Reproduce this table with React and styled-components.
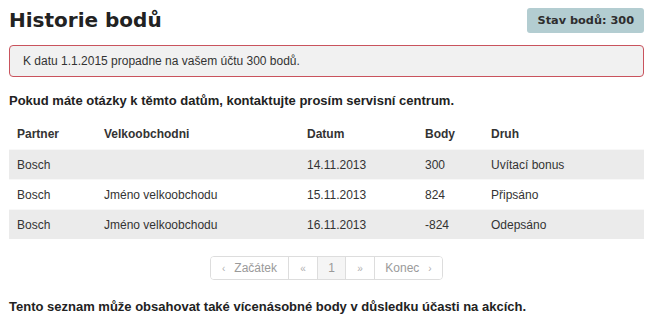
import styled, { createGlobalStyle } from 'styled-components';

const GlobalStyle = createGlobalStyle`
    body {
        margin: 0;
        background: #ffffff;
        font-family: "Liberation Sans", Arial, sans-serif;
        color: #333333;
    }
`;

const Page = styled.div`
    display: flex;
    flex-direction: column;
    padding: 8px 6px 0 9px;
    width: 635px;
`;

const Header = styled.div`
    display: flex;
    justify-content: space-between;
    align-items: flex-start;
`;

const Title = styled.h1`
    margin: 0;
    font-family: "DejaVu Sans", Verdana, sans-serif;
    font-size: 20px;
    line-height: 24px;
    font-weight: bold;
    color: #222222;
`;

const Badge = styled.div`
    display: flex;
    align-items: center;
    height: 25px;
    padding: 0 10px 0 11px;
    background-color: #b3cdd1;
    border-radius: 3px;
    font-family: "DejaVu Sans", Verdana, sans-serif;
    font-size: 11.3px;
    font-weight: bold;
    color: #2e2e2e;
`;

const Alert = styled.div`
    margin-top: 12px;
    height: 30px;
    display: flex;
    align-items: center;
    padding: 0 13px;
    background-color: #f1f1f1;
    border: 1px solid #c9535d;
    border-radius: 4px;
    font-size: 12px;
    color: #333333;
`;

const Notice = styled.p`
    margin: 16px 0 0;
    font-size: 13px;
    line-height: 16px;
    font-weight: bold;
    color: #222222;
`;

const Table = styled.table`
    margin-top: 10px;
    width: 100%;
    table-layout: fixed;
    border-collapse: collapse;
    font-size: 12px;
`;

const HeadCell = styled.th`
    height: 30px;
    padding: 0 0 0 8px;
    text-align: left;
    font-weight: bold;
    color: #333333;
    width: ${p => p.$w || 'auto'};
`;

const Row = styled.tr`
    background-color: ${p => (p.$odd ? '#ebebeb' : '#ffffff')};
    border-top: 1px solid #f8f8f8;
`;

const Cell = styled.td`
    height: 29px;
    padding: 0 0 0 8px;
    color: #333333;
`;

const Pager = styled.div`
    display: flex;
    justify-content: center;
    margin-top: 17px;
`;

const PagerList = styled.div`
    display: flex;
    border: 1px solid #dddddd;
    border-radius: 4px;
    overflow: hidden;
`;

const PagerItem = styled.span`
    display: flex;
    align-items: center;
    justify-content: center;
    gap: 9px;
    height: 22px;
    width: ${p => p.$w}px;
    font-size: 12px;
    color: #9a9a9a;
    background-color: ${p => (p.$active ? '#f5f5f5' : '#ffffff')};
    border-left: ${p => (p.$first ? 'none' : '1px solid #dddddd')};
    box-sizing: border-box;
`;

const Arrow = styled.span`
    font-size: 10px;
    color: #b0b0b0;
`;

const Footer = styled(Notice)`
    margin-top: 19px;
`;

const rows = [
    { partner: 'Bosch', shop: '', date: '14.11.2013', points: '300', kind: 'Uvítací bonus' },
    { partner: 'Bosch', shop: 'Jméno velkoobchodu', date: '15.11.2013', points: '824', kind: 'Připsáno' },
    { partner: 'Bosch', shop: 'Jméno velkoobchodu', date: '16.11.2013', points: '-824', kind: 'Odepsáno' },
];

export default function App() {
    return (
        <>
            <GlobalStyle />
            <Page>
                <Header>
                    <Title>Historie bodů</Title>
                    <Badge>Stav bodů: 300</Badge>
                </Header>

                <Alert>K datu 1.1.2015 propadne na vašem účtu 300 bodů.</Alert>

                <Notice>Pokud máte otázky k těmto datům, kontaktujte prosím servisní centrum.</Notice>

                <Table>
                    <thead>
                        <tr>
                            <HeadCell $w="79px">Partner</HeadCell>
                            <HeadCell $w="195px">Velkoobchodni</HeadCell>
                            <HeadCell $w="110px">Datum</HeadCell>
                            <HeadCell $w="58px">Body</HeadCell>
                            <HeadCell>Druh</HeadCell>
                        </tr>
                    </thead>
                    <tbody>
                        {rows.map((r, i) => (
                            <Row key={i} $odd={i % 2 === 0}>
                                <Cell>{r.partner}</Cell>
                                <Cell>{r.shop}</Cell>
                                <Cell>{r.date}</Cell>
                                <Cell>{r.points}</Cell>
                                <Cell>{r.kind}</Cell>
                            </Row>
                        ))}
                    </tbody>
                </Table>

                <Pager>
                    <PagerList>
                        <PagerItem $first $w={77}><Arrow>‹</Arrow>Začátek</PagerItem>
                        <PagerItem $w={29}><Arrow>«</Arrow></PagerItem>
                        <PagerItem $w={28} $active>1</PagerItem>
                        <PagerItem $w={29}><Arrow>»</Arrow></PagerItem>
                        <PagerItem $w={68}>Konec<Arrow>›</Arrow></PagerItem>
                    </PagerList>
                </Pager>

                <Footer>Tento seznam může obsahovat také vícenásobné body v důsledku účasti na akcích.</Footer>
            </Page>
        </>
    );
}
